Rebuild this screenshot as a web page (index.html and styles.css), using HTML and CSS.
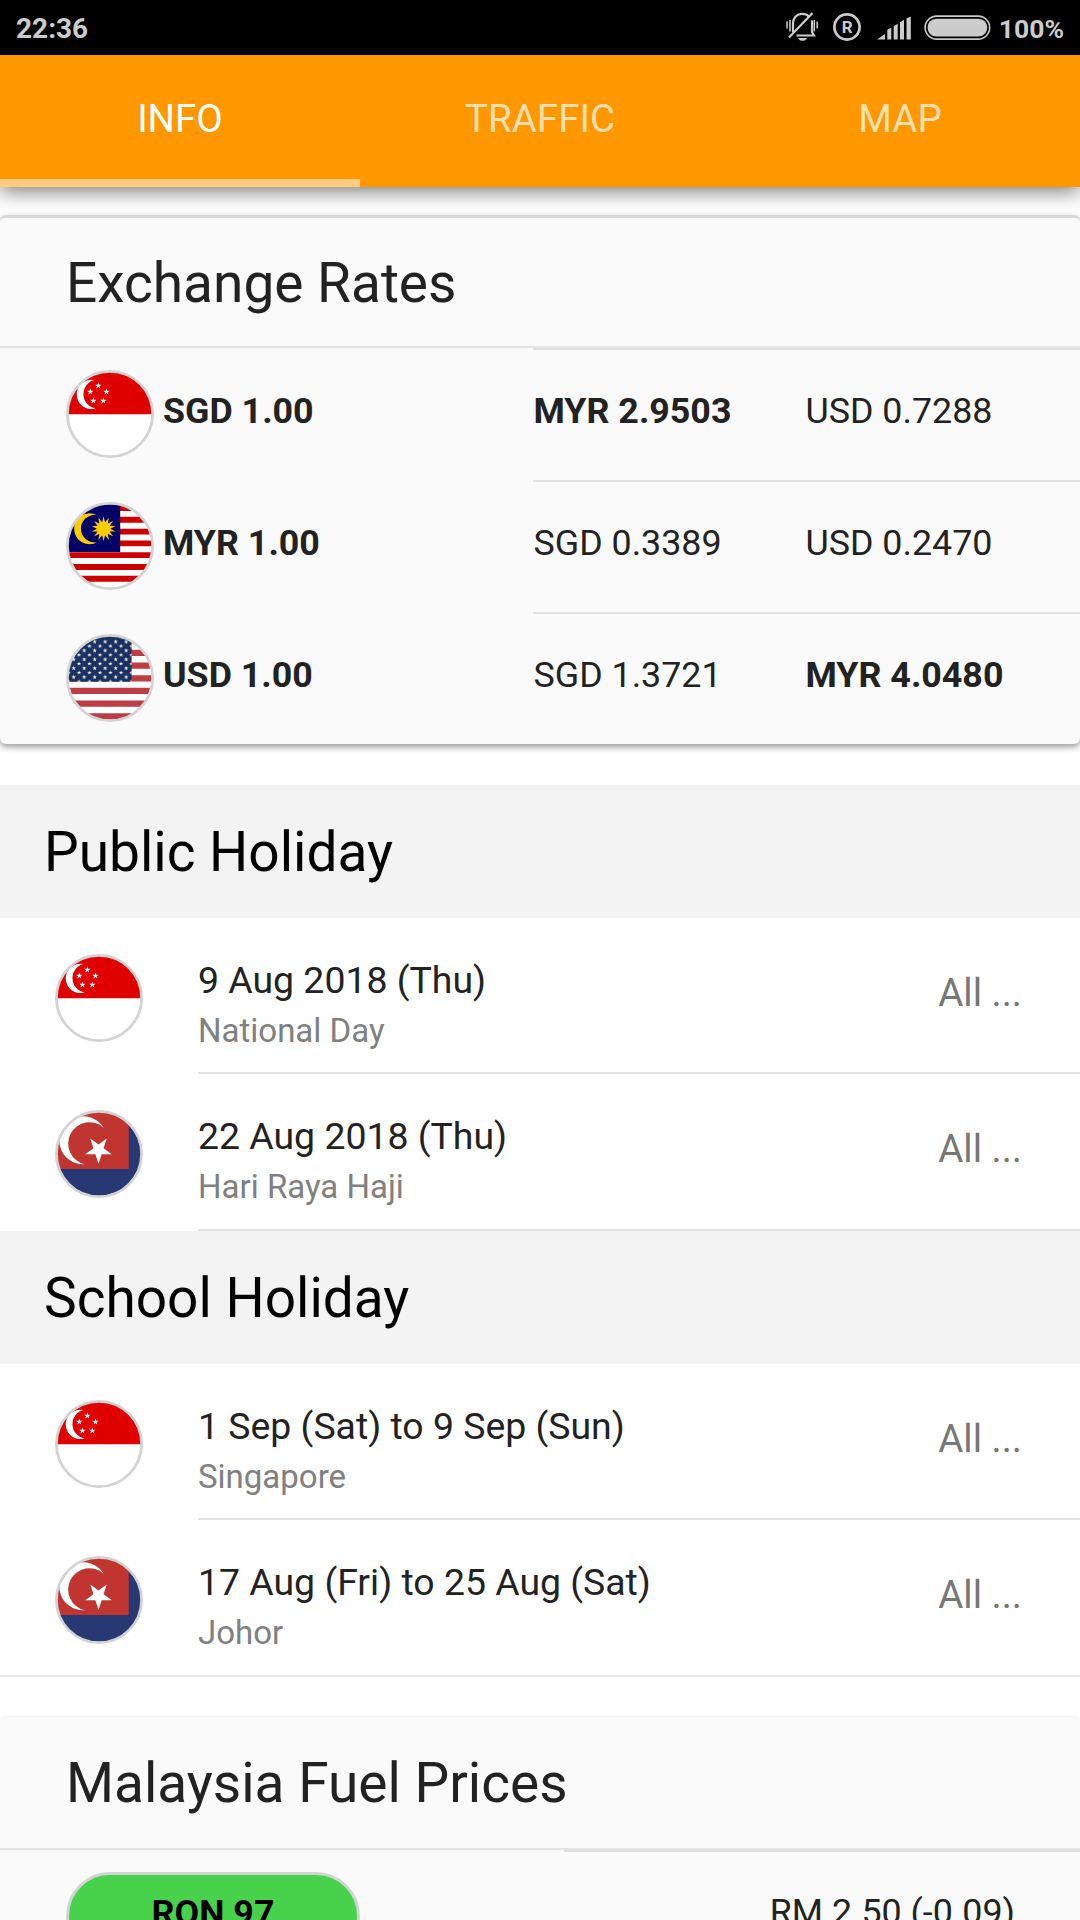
FILE: index.html
```html
<!DOCTYPE html>
<html lang="en">
<head>
<meta charset="utf-8">
<title>Info</title>
<link rel="stylesheet" href="styles.css">
</head>
<body>
<svg class="defs" aria-hidden="true">
  <defs>
    <clipPath id="disc"><circle cx="44" cy="44" r="42"/></clipPath>
    <path id="star" d="M0-1 .2245-.309 .951-.309 .363 .118 .588 .809 0 .382-.588 .809-.363 .118-.951-.309-.2245-.309Z"/>
    <path id="ray" d="M-.13-.5 0-1 .13-.5Z"/>
    <pattern id="stars" x="5.1" y="5.5" width="10.5" height="8.84" patternUnits="userSpaceOnUse">
      <use href="#star" transform="translate(2.6 2.2) scale(2.3)" fill="#fff"/>
      <use href="#star" transform="translate(7.87 6.6) scale(2.3)" fill="#fff"/>
    </pattern>
    <symbol id="flag-sg" viewBox="0 0 88 88">
      <g clip-path="url(#disc)">
        <path fill="#fff" d="M0 0h88v88H0z"/>
        <path fill="#df0000" d="M0 0h88v44.2H0z"/>
        <path fill="#fff" d="M28.3 10A14.7 14.7 0 1 0 29.6 38.5A14.6 14.6 0 0 1 28.3 10Z"/>
        <g fill="#fff">
          <use href="#star" transform="translate(32.3 15.8) scale(3.4)"/>
          <use href="#star" transform="translate(24.3 21.8) scale(3.4)"/>
          <use href="#star" transform="translate(40.5 21.8) scale(3.4)"/>
          <use href="#star" transform="translate(27.4 30.8) scale(3.4)"/>
          <use href="#star" transform="translate(37.3 30.8) scale(3.4)"/>
        </g>
      </g>
      <circle cx="44" cy="44" r="42.6" fill="none" stroke="#d3d3d3" stroke-width="2.8"/>
    </symbol>
    <symbol id="flag-my" viewBox="0 0 88 88">
      <g clip-path="url(#disc)">
        <path fill="#fff" d="M0 0h88v88H0z"/>
        <path fill="#c00" d="M0 3h88v5.9H0zM0 14.8h88v5.9H0zM0 26.7h88v5.9H0zM0 38.4h88v5.9H0zM0 50.2h88v5.9H0zM0 62h88v5.9H0zM0 73.8h88v5.9H0z"/>
        <path fill="#006" d="M0 0h54.2v50H0z"/>
        <path fill="#fc0" d="M30.8 13A15.5 15.5 0 1 0 31.3 40.2A13.8 13.8 0 1 1 30.8 13Z"/>
        <g fill="#fc0" transform="translate(37.6 26.7) scale(12.2)">
          <circle r=".56"/>
          <use href="#ray"/><use href="#ray" transform="rotate(25.71)"/><use href="#ray" transform="rotate(51.43)"/>
          <use href="#ray" transform="rotate(77.14)"/><use href="#ray" transform="rotate(102.86)"/><use href="#ray" transform="rotate(128.57)"/>
          <use href="#ray" transform="rotate(154.29)"/><use href="#ray" transform="rotate(180)"/><use href="#ray" transform="rotate(205.71)"/>
          <use href="#ray" transform="rotate(231.43)"/><use href="#ray" transform="rotate(257.14)"/><use href="#ray" transform="rotate(282.86)"/>
          <use href="#ray" transform="rotate(308.57)"/><use href="#ray" transform="rotate(334.29)"/>
        </g>
      </g>
      <circle cx="44" cy="44" r="42.6" fill="none" stroke="#d3d3d3" stroke-width="2.8"/>
    </symbol>
    <symbol id="flag-us" viewBox="0 0 88 88">
      <g clip-path="url(#disc)">
        <path fill="#fff" d="M0 0h88v88H0z"/>
        <path fill="#bc3d45" d="M0 3h88v6.3H0zM0 15.7h88v6.3H0zM0 28.4h88v6.3H0zM0 41.2h88v6.3H0zM0 53.8h88v6.3H0zM0 66.5h88v6.3H0zM0 79.2h88v6.3H0z"/>
        <path fill="#1a3160" d="M0 2h65.6v45.7H0z"/>
        <path fill="url(#stars)" d="M0 5.5h65.6v42.2H0z"/>
      </g>
      <circle cx="44" cy="44" r="42.6" fill="none" stroke="#d3d3d3" stroke-width="2.8"/>
    </symbol>
    <symbol id="flag-johor" viewBox="0 0 88 88">
      <g clip-path="url(#disc)">
        <path fill="#283873" d="M0 0h88v88H0z"/>
        <path fill="#c13531" d="M0 0h73.7v59H0z"/>
        <path fill="#fff" d="M48.7 17.7A24 24 0 1 0 29.7 54.3A21.3 21.3 0 1 1 48.7 17.7Z"/>
        <use href="#star" fill="#fff" transform="translate(43.5 39.8) rotate(180) scale(14)"/>
      </g>
      <circle cx="44" cy="44" r="42.6" fill="none" stroke="#d3d3d3" stroke-width="2.8"/>
    </symbol>
  </defs>
</svg>

<header class="status">
  <span class="clock">22:36</span>
  <div class="status-icons">
    <svg class="ico-bell" width="32" height="30" viewBox="0 0 32 30">
      <g fill="none" stroke="#ccc" stroke-width="2.2">
        <path d="M7 20.5V11.5C7 5.5 11 1.8 16 1.8c3 0 5.400 1 7 2.800M26 8.500V20l2 3.500H10.500"/>
        <path d="M3 25.500 26.500 1"/>
        <path stroke-width="1.500" d="M1 9.500v7M4 8v11.500M28.300 8v11.500M31.200 9.500v7"/>
      </g>
      <path fill="#ccc" d="M12 26h9c-1 2-2.500 2.800-4.500 2.800S13 28 12 26Z"/>
    </svg>
    <svg class="ico-reg" width="28" height="28" viewBox="0 0 28 28">
      <circle cx="14" cy="14" r="12.600" fill="none" stroke="#ccc" stroke-width="2.700"/>
      <text class="reg-letter" x="14.200" y="20" text-anchor="middle">R</text>
    </svg>
    <svg class="ico-signal" width="34" height="24" viewBox="0 0 34 24">
      <path fill="#ccc" d="M0 23.500 8 18v5.500zM10.300 23.500V13.800l4-2.100v11.800zM16.700 23.500V10.200l4-2.500v15.800zM23 23.500V6.200l4-2.500v19.800zM29.500 23.500V2.500l4.300-2v23z"/>
    </svg>
    <svg class="ico-battery" width="67" height="26" viewBox="0 0 67 26">
      <rect x="1.100" y="1.100" width="64.600" height="23" rx="11.500" fill="none" stroke="#ccc" stroke-width="1.600"/>
      <rect x="3.500" y="3.700" width="59.800" height="17.800" rx="8.900" fill="#ccc"/>
    </svg>
    <span class="percent">100%</span>
  </div>
</header>

<nav class="tabs">
  <a class="tab tab-active">INFO</a>
  <a class="tab">TRAFFIC</a>
  <a class="tab">MAP</a>
</nav>

<main>
  <section class="card card-rates">
    <h2 class="card-title">Exchange Rates</h2>
    <div class="rate">
      <div class="base"><svg class="flag"><use href="#flag-sg"/></svg><b>SGD 1.00</b></div>
      <div class="quote"><b>MYR 2.9503</b></div>
      <div class="quote">USD 0.7288</div>
    </div>
    <div class="rate">
      <div class="base"><svg class="flag"><use href="#flag-my"/></svg><b>MYR 1.00</b></div>
      <div class="quote">SGD 0.3389</div>
      <div class="quote">USD 0.2470</div>
    </div>
    <div class="rate">
      <div class="base"><svg class="flag"><use href="#flag-us"/></svg><b>USD 1.00</b></div>
      <div class="quote">SGD 1.3721</div>
      <div class="quote"><b>MYR 4.0480</b></div>
    </div>
  </section>

  <section class="list">
    <h2 class="divider">Public Holiday</h2>
    <div class="item">
      <svg class="flag"><use href="#flag-sg"/></svg>
      <div class="item-body">
        <div><h3 class="item-title">9 Aug 2018 (Thu)</h3><p class="item-sub">National Day</p></div>
        <a class="all">All ...</a>
      </div>
    </div>
    <div class="item">
      <svg class="flag"><use href="#flag-johor"/></svg>
      <div class="item-body">
        <div><h3 class="item-title">22 Aug 2018 (Thu)</h3><p class="item-sub">Hari Raya Haji</p></div>
        <a class="all">All ...</a>
      </div>
    </div>
    <h2 class="divider">School Holiday</h2>
    <div class="item">
      <svg class="flag"><use href="#flag-sg"/></svg>
      <div class="item-body">
        <div><h3 class="item-title">1 Sep (Sat) to 9 Sep (Sun)</h3><p class="item-sub">Singapore</p></div>
        <a class="all">All ...</a>
      </div>
    </div>
    <div class="item item-last">
      <svg class="flag"><use href="#flag-johor"/></svg>
      <div class="item-body">
        <div><h3 class="item-title">17 Aug (Fri) to 25 Aug (Sat)</h3><p class="item-sub">Johor</p></div>
        <a class="all">All ...</a>
      </div>
    </div>
  </section>

  <section class="card card-fuel">
    <h2 class="card-title">Malaysia Fuel Prices</h2>
    <div class="fuel">
      <div class="grade"><span class="pill">RON 97</span></div>
      <div class="price">RM 2.50 (-0.09)</div>
    </div>
  </section>
</main>
</body>
</html>
```
FILE: styles.css
```css
* { box-sizing: border-box; }
html, body { margin: 0; }
body {
  width: 1080px;
  height: 1920px;
  overflow: hidden;
  background: #fff;
  color: #222;
  font-family: Roboto, sans-serif;
  font-size: 35.800px;
}
h2, h3, p { margin: 0; font-weight: 400; }
svg { display: block; flex: none; }
.defs { position: absolute; width: 0; height: 0; }

.status {
  display: flex;
  justify-content: space-between;
  height: 55px;
  padding: 0 16px;
  background: #000;
  color: #ccc;
  font-size: 28px;
  font-weight: 700;
  line-height: 57px;
}
.status-icons { display: flex; align-items: flex-start; }
.percent { font-size: 26.500px; }
.ico-bell { margin: 12px 15px 0 0; }
.ico-reg { margin: 13px 16px 0 0; }
.ico-signal { margin: 16px 13px 0 0; }
.ico-battery { margin: 15px 8px 0 0; }
.reg-letter { font-size: 17px; font-weight: 700; fill: #ccc; }

.tabs {
  position: relative;
  display: grid;
  grid-template-columns: repeat(3, 1fr);
  height: 132px;
  background: #ff9800;
  box-shadow: 0 4px 20px rgba(0, 0, 0, .55);
}
.tab {
  height: 132px;
  text-align: center;
  color: rgba(255, 255, 255, .7);
  font-size: 38.500px;
  line-height: 128px;
}
.tab-active { color: #fff; border-bottom: 8px solid #ffcb80; }

.card { background: #fafafa; border-radius: 6px; }
.card-title {
  height: 133px;
  padding-left: 66px;
  border-bottom: 2px solid #e3e3e3;
  font-size: 55px;
  line-height: 133px;
}
.card-rates {
  margin-top: 28px;
  height: 529px;
  border-top: 3px solid #d9d9d9;
  box-shadow: 0 3px 6px rgba(0, 0, 0, .4);
}
.card-rates .card-title { height: 130px; line-height: 131px; }
.rate {
  display: grid;
  grid-template-columns: 467px 272px 275px;
  height: 132px;
  padding-left: 66px;
}
.base { display: flex; gap: 9px; line-height: 127px; }
.quote { padding-left: .5px; line-height: 127px; }
.rate + .rate .quote { border-top: 2px solid #e2e2e2; line-height: 123px; }
.card-title + .rate .quote { border-top: 2px solid #dedede; line-height: 123px; }
.flag { width: 88px; height: 88px; margin-top: 22px; }

.list { margin-top: 41px; border-bottom: 2px solid #e6e6e6; }
.divider {
  height: 132.500px;
  padding-left: 44px;
  background: #f3f3f3;
  color: #000;
  font-size: 55px;
  line-height: 134px;
}
.item { display: flex; gap: 55px; height: 156.750px; padding-left: 55px; }
.item .flag { margin-top: 36px; }
.item-body {
  flex: 1;
  display: flex;
  justify-content: space-between;
  padding: 38px 58px 0 0;
  border-bottom: 2px solid #e2e2e2;
}
.item-last { height: 154.750px; }
.item-last .item-body { border-bottom: 0; }
.item-title { font-size: 37.400px; line-height: 48px; }
.item-sub { font-size: 33px; line-height: 54px; color: #808080; }
.all { color: #777; font-size: 38.500px; line-height: 74px; }

.card-fuel { margin-top: 40px; box-shadow: 0 0 3px rgba(0, 0, 0, .12); }
.fuel { display: grid; grid-template-columns: 498px 516px; height: 132px; padding-left: 66px; }
.grade { padding-top: 22px; }
.pill {
  display: block;
  width: 294px;
  height: 88px;
  border: 3px solid #d3d3d3;
  border-radius: 44px;
  background: #48d24b;
  color: #000;
  font-weight: 700;
  text-align: center;
  line-height: 77px;
}
.price { padding-right: 65px; border-top: 2px solid #ddd; text-align: right; line-height: 121px; }
```
